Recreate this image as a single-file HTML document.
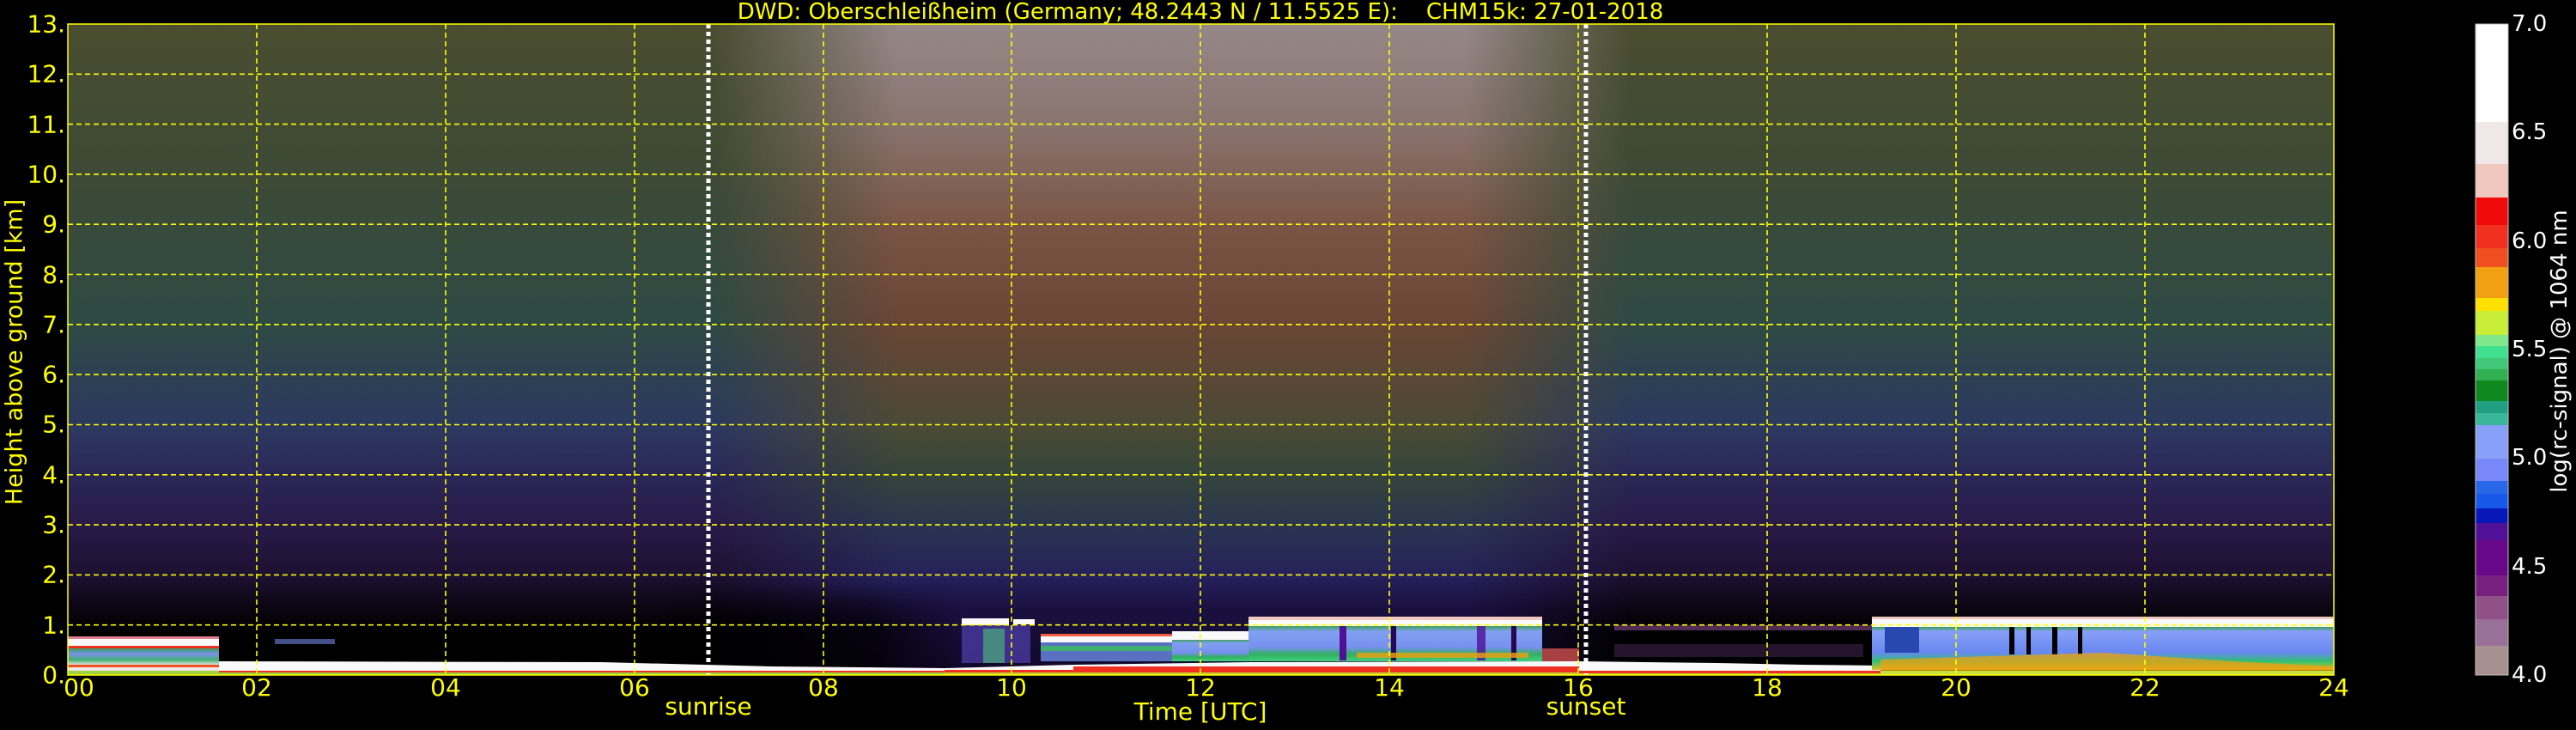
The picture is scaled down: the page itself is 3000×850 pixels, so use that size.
<!DOCTYPE html>
<html><head><meta charset="utf-8"><style>
html,body{margin:0;padding:0;background:#000;width:3000px;height:850px;overflow:hidden}
svg{display:block}
text{font-family:"DejaVu Sans","Liberation Sans",sans-serif}
</style></head><body>
<svg width="3000" height="850" viewBox="0 0 3000 850" xmlns="http://www.w3.org/2000/svg">
<defs>
<linearGradient id="side" x1="0" y1="28" x2="0" y2="786" gradientUnits="userSpaceOnUse">
<stop offset="0" stop-color="#4a4d30"/>
<stop offset="0.23" stop-color="#3d4a35"/>
<stop offset="0.46" stop-color="#2e4a45"/>
<stop offset="0.62" stop-color="#2c3860"/>
<stop offset="0.69" stop-color="#2a2858"/>
<stop offset="0.77" stop-color="#281a48"/>
<stop offset="0.85" stop-color="#1c1030"/>
<stop offset="0.90" stop-color="#0a0510"/>
<stop offset="0.93" stop-color="#000"/>
<stop offset="1" stop-color="#000"/>
</linearGradient>
<linearGradient id="mid" x1="0" y1="28" x2="0" y2="786" gradientUnits="userSpaceOnUse">
<stop offset="0" stop-color="#958888"/>
<stop offset="0.15" stop-color="#8a7570"/>
<stop offset="0.31" stop-color="#7a5545"/>
<stop offset="0.46" stop-color="#6a4535"/>
<stop offset="0.62" stop-color="#4a4a35"/>
<stop offset="0.69" stop-color="#35453a"/>
<stop offset="0.77" stop-color="#2a3550"/>
<stop offset="0.85" stop-color="#25205a"/>
<stop offset="0.90" stop-color="#1a1040"/>
<stop offset="1" stop-color="#100828"/>
</linearGradient>
<linearGradient id="hm" x1="830" y1="0" x2="1900" y2="0" gradientUnits="userSpaceOnUse">
<stop offset="0" stop-color="#fff" stop-opacity="0"/>
<stop offset="0.2" stop-color="#fff" stop-opacity="1"/>
<stop offset="0.82" stop-color="#fff" stop-opacity="1"/>
<stop offset="1" stop-color="#fff" stop-opacity="0"/>
</linearGradient>
<mask id="mm"><rect x="79" y="28" width="2639" height="758" fill="url(#hm)"/></mask>
<linearGradient id="dk" x1="780" y1="0" x2="1120" y2="0" gradientUnits="userSpaceOnUse">
<stop offset="0" stop-color="#000" stop-opacity="0"/>
<stop offset="0.3" stop-color="#000" stop-opacity="0.7"/>
<stop offset="0.7" stop-color="#000" stop-opacity="0.7"/>
<stop offset="1" stop-color="#000" stop-opacity="0"/>
</linearGradient>
<linearGradient id="dkv" x1="0" y1="680" x2="0" y2="730" gradientUnits="userSpaceOnUse">
<stop offset="0" stop-color="#fff" stop-opacity="0"/>
<stop offset="1" stop-color="#fff" stop-opacity="1"/>
</linearGradient>
<mask id="dm"><rect x="780" y="680" width="340" height="106" fill="url(#dkv)"/></mask>
<linearGradient id="pbl" x1="0" y1="0" x2="0" y2="1">
<stop offset="0" stop-color="#3aa060"/>
<stop offset="0.35" stop-color="#7a90e8"/>
<stop offset="0.7" stop-color="#40b070"/>
<stop offset="1" stop-color="#e0e0e0"/>
</linearGradient>
<linearGradient id="blue" x1="0" y1="0" x2="0" y2="1">
<stop offset="0" stop-color="#40a060"/>
<stop offset="0.15" stop-color="#80a0f0"/>
<stop offset="0.6" stop-color="#7890f0"/>
<stop offset="0.8" stop-color="#30b060"/>
<stop offset="1" stop-color="#40d080"/>
</linearGradient>
<linearGradient id="rgt" x1="0" y1="0" x2="0" y2="1">
<stop offset="0" stop-color="#30a050"/>
<stop offset="0.1" stop-color="#88a0f8"/>
<stop offset="0.6" stop-color="#6888f0"/>
<stop offset="0.8" stop-color="#30c070"/>
<stop offset="1" stop-color="#e0c020"/>
</linearGradient>
</defs>

<rect x="79" y="28" width="2639" height="758" fill="url(#side)"/>
<rect x="79" y="28" width="2639" height="758" fill="url(#mid)" mask="url(#mm)"/>
<rect x="780" y="680" width="340" height="106" fill="url(#dk)" mask="url(#dm)"/>

<rect x="79" y="741" width="176" height="3" fill="#e08090"/>
<rect x="79" y="744" width="176" height="8" fill="#fafafa"/>
<rect x="79" y="752" width="176" height="3" fill="#f03020"/>
<rect x="79" y="755" width="176" height="19" fill="url(#pbl)"/>
<rect x="79" y="774" width="176" height="3" fill="#f05020"/>
<rect x="79" y="777" width="176" height="4" fill="#f0e8e8"/>
<rect x="79" y="781" width="176" height="5" fill="#a0d040"/>
<rect x="320" y="744" width="70" height="6" fill="#6070c0" opacity="0.7"/>
<polygon points="255,770 700,771 900,776 1100,778 1100,782 255,781" fill="#fafafa"/>
<rect x="255" y="781" width="845" height="2" fill="#f03020"/>
<rect x="255" y="783" width="845" height="3" fill="#a0d040"/>

<rect x="1120" y="720" width="55" height="8" fill="#fafafa"/>
<rect x="1180" y="721" width="25" height="6" fill="#fafafa"/>
<rect x="1120" y="728" width="80" height="44" fill="#4a3aa0" opacity="0.8"/>
<rect x="1145" y="732" width="25" height="40" fill="#4aa080" opacity="0.8"/>
<rect x="1212" y="738" width="160" height="3" fill="#f06040"/>
<rect x="1212" y="741" width="160" height="7" fill="#fafafa"/>
<rect x="1212" y="748" width="160" height="22" fill="#5a70c0"/>
<rect x="1212" y="752" width="160" height="6" fill="#40b070"/>
<rect x="1365" y="735" width="90" height="10" fill="#fafafa"/>
<rect x="1365" y="745" width="90" height="25" fill="url(#blue)"/>
<rect x="1454" y="718" width="342" height="4" fill="#f0c8c0"/>
<rect x="1454" y="722" width="342" height="7" fill="#fafafa"/>
<rect x="1454" y="729" width="342" height="41" fill="url(#blue)"/>
<rect x="1560" y="729" width="8" height="40" fill="#501098"/>
<rect x="1620" y="729" width="6" height="40" fill="#280850"/>
<rect x="1720" y="729" width="10" height="40" fill="#501098" opacity="0.8"/>
<rect x="1760" y="729" width="6" height="40" fill="#280850"/>
<rect x="1580" y="760" width="200" height="6" fill="#f0a010" opacity="0.8"/>
<rect x="1796" y="755" width="43" height="15" fill="#d05050" opacity="0.8"/>
<polygon points="1100,778 1250,774 1454,771 1839,770 1839,780 1100,782" fill="#fafafa"/>
<rect x="1100" y="780" width="739" height="3" fill="#f03020"/>
<rect x="1250" y="776" width="589" height="5" fill="#f03020"/>
<rect x="1100" y="783" width="739" height="3" fill="#c8d030"/>

<rect x="1880" y="728" width="300" height="6" fill="#8a4a90" opacity="0.6"/>
<rect x="1880" y="750" width="290" height="15" fill="#6a3a80" opacity="0.35"/>
<polygon points="1839,770 2000,772 2100,774 2190,775 2190,781 1839,781" fill="#fafafa"/>
<rect x="1839" y="781" width="351" height="3" fill="#f03020"/>
<rect x="1839" y="784" width="351" height="2" fill="#c8d030"/>
<rect x="2180" y="718" width="538" height="3" fill="#f0c8c0"/>
<rect x="2180" y="721" width="538" height="9" fill="#fafafa"/>
<rect x="2180" y="730" width="538" height="50" fill="url(#rgt)"/>
<rect x="2195" y="730" width="40" height="30" fill="#2848b0"/>
<rect x="2340" y="730" width="6" height="32" fill="#000"/>
<rect x="2360" y="730" width="5" height="32" fill="#000"/>
<rect x="2390" y="730" width="6" height="32" fill="#000"/>
<rect x="2420" y="730" width="5" height="32" fill="#000"/>
<polygon points="2190,768 2450,760 2600,770 2718,776 2718,781 2190,781" fill="#f0a010" opacity="0.75"/>
<rect x="2190" y="781" width="528" height="5" fill="#c8e040"/>

<g stroke="#ffff00" stroke-width="1.6" stroke-dasharray="6,4">
<line x1="79" x2="2718" y1="727.7" y2="727.7"/>
<line x1="79" x2="2718" y1="669.4" y2="669.4"/>
<line x1="79" x2="2718" y1="611.1" y2="611.1"/>
<line x1="79" x2="2718" y1="552.8" y2="552.8"/>
<line x1="79" x2="2718" y1="494.5" y2="494.5"/>
<line x1="79" x2="2718" y1="436.2" y2="436.2"/>
<line x1="79" x2="2718" y1="377.8" y2="377.8"/>
<line x1="79" x2="2718" y1="319.5" y2="319.5"/>
<line x1="79" x2="2718" y1="261.2" y2="261.2"/>
<line x1="79" x2="2718" y1="202.9" y2="202.9"/>
<line x1="79" x2="2718" y1="144.6" y2="144.6"/>
<line x1="79" x2="2718" y1="86.3" y2="86.3"/>
</g>
<g stroke="#ffff00" stroke-width="1.6" stroke-dasharray="6,4">
<line y1="28" y2="786" x1="299" x2="299"/>
<line y1="28" y2="786" x1="519" x2="519"/>
<line y1="28" y2="786" x1="739" x2="739"/>
<line y1="28" y2="786" x1="959" x2="959"/>
<line y1="28" y2="786" x1="1178" x2="1178"/>
<line y1="28" y2="786" x1="1398" x2="1398"/>
<line y1="28" y2="786" x1="1618" x2="1618"/>
<line y1="28" y2="786" x1="1838" x2="1838"/>
<line y1="28" y2="786" x1="2058" x2="2058"/>
<line y1="28" y2="786" x1="2278" x2="2278"/>
<line y1="28" y2="786" x1="2498" x2="2498"/>
</g>
<g stroke="#ffffff" stroke-width="5" stroke-dasharray="5,4">
<line x1="825" x2="825" y1="28" y2="786"/>
<line x1="1847" x2="1847" y1="28" y2="786"/>
</g>
<rect x="79" y="28" width="2639" height="758" fill="none" stroke="#ffff00" stroke-width="1.5"/>

<text x="1398" y="22" fill="#ffff00" font-size="26" text-anchor="middle" xml:space="preserve">DWD: Oberschleißheim (Germany; 48.2443 N / 11.5525 E):    CHM15k: 27-01-2018</text>

<g fill="#ffff00" font-size="28" text-anchor="end" dominant-baseline="central">
<text x="76" y="28">13.</text><text x="76" y="86">12.</text><text x="76" y="145">11.</text>
<text x="76" y="203">10.</text><text x="76" y="261">9.</text><text x="76" y="320">8.</text>
<text x="76" y="378">7.</text><text x="76" y="436">6.</text><text x="76" y="494">5.</text>
<text x="76" y="553">4.</text><text x="76" y="611">3.</text><text x="76" y="669">2.</text>
<text x="76" y="728">1.</text><text x="76" y="786">0.</text>
</g>
<text transform="translate(17,410) rotate(-90)" fill="#ffff00" font-size="27" text-anchor="middle" dominant-baseline="central">Height above ground [km]</text>

<g fill="#ffff00" font-size="28" text-anchor="middle">
<text x="92" y="810">00</text><text x="299" y="810">02</text><text x="519" y="810">04</text>
<text x="739" y="810">06</text><text x="959" y="810">08</text><text x="1178" y="810">10</text>
<text x="1398" y="810">12</text><text x="1618" y="810">14</text><text x="1838" y="810">16</text>
<text x="2058" y="810">18</text><text x="2278" y="810">20</text><text x="2498" y="810">22</text>
<text x="2718" y="810">24</text>
<text x="825" y="832">sunrise</text>
<text x="1847" y="832">sunset</text>
<text x="1398" y="838">Time [UTC]</text>
</g>

<g>
<rect x="2883" y="28" width="38" height="114" fill="#ffffff"/>
<rect x="2883" y="142" width="38" height="49" fill="#f0e8e8"/>
<rect x="2883" y="191" width="38" height="39" fill="#f0c8c0"/>
<rect x="2883" y="230" width="38" height="32" fill="#f20a0a"/>
<rect x="2883" y="262" width="38" height="27" fill="#f03020"/>
<rect x="2883" y="289" width="38" height="22" fill="#f05020"/>
<rect x="2883" y="311" width="38" height="36" fill="#f0a010"/>
<rect x="2883" y="347" width="38" height="15" fill="#ffe000"/>
<rect x="2883" y="362" width="38" height="28" fill="#c8ee38"/>
<rect x="2883" y="390" width="38" height="13" fill="#80e888"/>
<rect x="2883" y="403" width="38" height="14" fill="#40e090"/>
<rect x="2883" y="417" width="38" height="13" fill="#40c878"/>
<rect x="2883" y="430" width="38" height="13" fill="#30b050"/>
<rect x="2883" y="443" width="38" height="24" fill="#108820"/>
<rect x="2883" y="467" width="38" height="14" fill="#20a080"/>
<rect x="2883" y="481" width="38" height="14" fill="#38b898"/>
<rect x="2883" y="495" width="38" height="39" fill="#88a0f8"/>
<rect x="2883" y="534" width="38" height="26" fill="#7888f8"/>
<rect x="2883" y="560" width="38" height="15" fill="#2868e8"/>
<rect x="2883" y="575" width="38" height="17" fill="#1858e8"/>
<rect x="2883" y="592" width="38" height="17" fill="#0818b8"/>
<rect x="2883" y="609" width="38" height="20" fill="#501098"/>
<rect x="2883" y="629" width="38" height="41" fill="#680888"/>
<rect x="2883" y="670" width="38" height="24" fill="#782080"/>
<rect x="2883" y="694" width="38" height="27" fill="#905088"/>
<rect x="2883" y="721" width="38" height="31" fill="#987098"/>
<rect x="2883" y="752" width="38" height="34" fill="#a89090"/>
<rect x="2883" y="28" width="38" height="758" fill="none" stroke="#bbbbbb" stroke-width="1"/>
</g>
<g fill="#ffffff" font-size="26" dominant-baseline="central">
<text x="2925" y="28">7.0</text><text x="2925" y="154">6.5</text><text x="2925" y="281">6.0</text>
<text x="2925" y="407">5.5</text><text x="2925" y="533">5.0</text><text x="2925" y="660">4.5</text>
<text x="2925" y="786">4.0</text>
</g>
<text transform="translate(2981,409) rotate(-90)" fill="#ffffff" font-size="26" text-anchor="middle" dominant-baseline="central">log(rc-signal) @ 1064 nm</text>
</svg>
</body></html>
